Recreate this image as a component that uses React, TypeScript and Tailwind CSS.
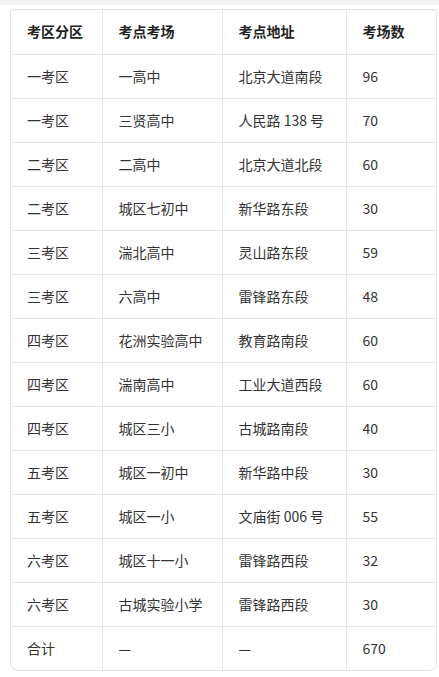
const rows: [string, string, string, string][] = [
  ["一考区", "一高中", "北京大道南段", "96"],
  ["一考区", "三贤高中", "人民路 138 号", "70"],
  ["二考区", "二高中", "北京大道北段", "60"],
  ["二考区", "城区七初中", "新华路东段", "30"],
  ["三考区", "湍北高中", "灵山路东段", "59"],
  ["三考区", "六高中", "雷锋路东段", "48"],
  ["四考区", "花洲实验高中", "教育路南段", "60"],
  ["四考区", "湍南高中", "工业大道西段", "60"],
  ["四考区", "城区三小", "古城路南段", "40"],
  ["五考区", "城区一初中", "新华路中段", "30"],
  ["五考区", "城区一小", "文庙街 006 号", "55"],
  ["六考区", "城区十一小", "雷锋路西段", "32"],
  ["六考区", "古城实验小学", "雷锋路西段", "30"],
  ["合计", "—", "—", "670"],
];

const widths = ["w-[91px]", "w-[120px]", "w-[124px]", "w-[91px]"];

export default function App() {
  return (
    <div
      className="w-[439px] h-[677px] bg-white overflow-hidden"
      style={{ fontFamily: '"Noto Sans CJK SC", "Noto Sans", sans-serif' }}
    >
      <div className="h-[5px] bg-[#f3f3f3]" />
      <div className="ml-[10px] mt-[4px] w-[427px] border border-[#e6e6e6] rounded-t-[2px] rounded-b-[8px] overflow-hidden">
        <table className="w-full border-collapse table-fixed">
          <thead>
            <tr className="h-[44px]">
              {["考区分区", "考点考场", "考点地址", "考场数"].map((h, i) => (
                <th
                  key={h}
                  className={`${widths[i]} ${i < 3 ? "border-r" : ""} border-b border-[#e6e6e6] text-left font-bold text-[14px] text-[#222] pl-[16px] pr-1`}
                >
                  {h}
                </th>
              ))}
            </tr>
          </thead>
          <tbody>
            {rows.map((r, ri) => (
              <tr key={ri} className="h-[44px]">
                {r.map((c, i) => (
                  <td
                    key={i}
                    className={`${i < 3 ? "border-r" : ""} ${ri < rows.length - 1 ? "border-b" : ""} border-[#e6e6e6] text-left text-[14px] text-[#333] pl-[16px] pr-1 whitespace-nowrap`}
                  >
                    {c}
                  </td>
                ))}
              </tr>
            ))}
          </tbody>
        </table>
      </div>
    </div>
  );
}
